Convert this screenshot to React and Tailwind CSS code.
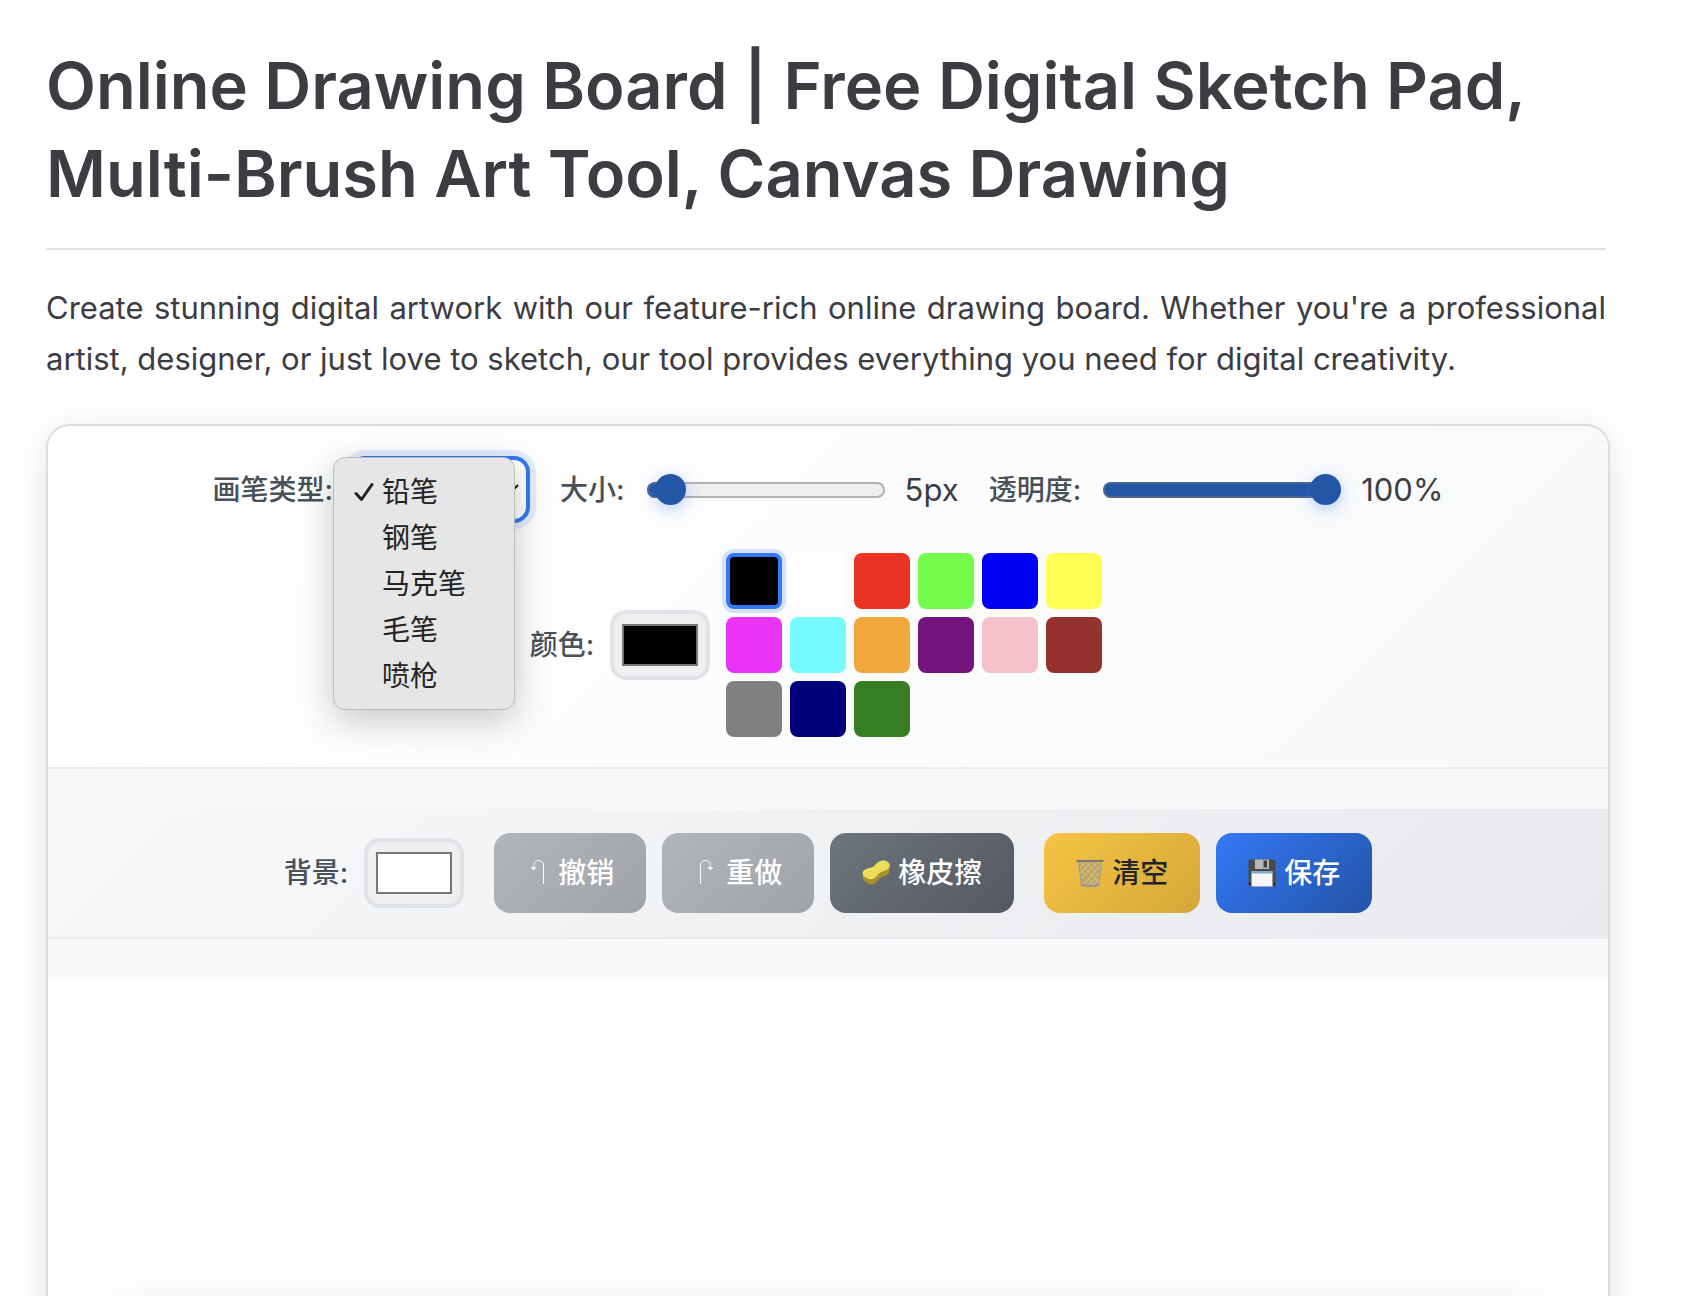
import React, { useState } from "react";

const BRUSHES = ["铅笔", "钢笔", "马克笔", "毛笔", "喷枪"];

const COLORS = [
  { name: "black", className: "bg-black" },
  { name: "white", className: "bg-white" },
  { name: "red", className: "bg-[#eb3324]" },
  { name: "lime", className: "bg-[#75fb4c]" },
  { name: "blue", className: "bg-[#0000f5]" },
  { name: "yellow", className: "bg-[#ffff54]" },
  { name: "magenta", className: "bg-[#ea33f7]" },
  { name: "cyan", className: "bg-[#75fbfd]" },
  { name: "orange", className: "bg-[#f0a83c]" },
  { name: "purple", className: "bg-[#75147c]" },
  { name: "pink", className: "bg-[#f4c2cb]" },
  { name: "brown", className: "bg-[#94332d]" },
  { name: "gray", className: "bg-[#808080]" },
  { name: "navy", className: "bg-[#00007b]" },
  { name: "green", className: "bg-[#377e22]" },
];

const UndoIcon = ({ className }) => (
  <svg viewBox="0 0 24 28" className={className} fill="none" aria-hidden="true">
    <path d="M17.500 25V6.500c0-3-2-5-4.900-5s-5 2.200-5 6.500" stroke="currentColor" strokeWidth="1" />
    <path d="M4.300 7.700l3.300.9 3.200-.9-3.200 3.800z" fill="currentColor" />
  </svg>
);

const SpongeIcon = () => (
  <svg viewBox="0 0 28 28" className="h-7 w-7" aria-hidden="true">
    <path d="M.6 13c0 4 .2 7 1.500 8.500C4.500 24 7.500 26 10.500 25.500c4.500-1 4.500-5.500 8.500-7 4-1.300 8-2.500 8.500-6V6z" fill="#a8912a" />
    <path d="M.6 14C.8 11 4.500 9.800 8.500 8.800c5-1 5.500-5.500 10.500-7 4-1 8.500 1 8.700 4.200.2 3.800-3.200 5.500-7.200 6.500-5.500 1.500-5.500 6.500-10 7.500C6.500 21 .4 17.500.6 14z" fill="#ece05a" />
    <g fill="#cfc03c">
      <circle cx="5" cy="14" r=".6" />
      <circle cx="8" cy="17" r=".6" />
      <circle cx="9" cy="12" r=".6" />
      <circle cx="13" cy="14" r=".6" />
      <circle cx="14" cy="9" r=".6" />
      <circle cx="18" cy="10" r=".6" />
      <circle cx="18" cy="5" r=".6" />
      <circle cx="22" cy="8" r=".6" />
      <circle cx="23" cy="4.500" r=".6" />
    </g>
  </svg>
);

const TrashIcon = () => (
  <svg viewBox="0 0 28 28" className="h-7 w-7" fill="none" aria-hidden="true">
    <path d="M2 2h24l-3 24.500c-4 1.500-14 1.500-18 0z" fill="#c9ab5c" />
    <g stroke="#8f928c" strokeWidth=".7">
      <path d="M3 6l19 21M3 12l13 15M4 18l7 9M6 2l18 19M12 2l13 14M18 2l8 9" />
    </g>
    <g stroke="#d6d6cf" strokeWidth=".7">
      <path d="M25 6L6 27M25 12L12 27M24 18l-7 9M22 2L4 21M16 2L3 16M10 2L2 11" />
    </g>
    <path d="M2.500 3l3 23M25.500 3l-3 23" stroke="#9a9b99" strokeWidth="1" />
    <path d="M5 26c4 1.300 14 1.300 18 0" stroke="#8e98a3" strokeWidth="2" />
    <path d="M.5 1h27v1.800H.5z" fill="#6f7276" />
  </svg>
);

const SaveIcon = () => (
  <svg viewBox="0 0 28 28" className="h-7 w-7" aria-hidden="true">
    <path d="M.5.500h25.500l1.500 1.500v25.500H2L.5 26z" fill="#4a4a4a" />
    <path d="M7 .500h14v9.500H7z" fill="#b8b8b8" />
    <path d="M15.500 1.500h3.500v7h-3.500z" fill="#404040" />
    <path d="M3.500 12.500h21v15h-21z" fill="#f6f6f6" />
    <path d="M3.500 12.500h21v2h-21z" fill="#74aee0" />
    <path d="M1 24h1.500v2H1zM25.500 24H27v2h-1.500z" fill="#1d1d1d" />
  </svg>
);

const Slider = ({ id, min, max, value, onChange }) => {
  // the fill has to stop under the middle of the 31px thumb
  const ratio = (value - min) / (max - min);
  const stop = `calc(${ratio} * (100% - 31px) + 15px)`;
  return (
    <input
      id={id}
      type="range"
      min={min}
      max={max}
      value={value}
      onChange={(e) => onChange(Number(e.target.value))}
      style={{
        backgroundImage: `linear-gradient(to right, #2456a6 ${stop}, #efefef ${stop})`,
      }}
      className="ml-1.5 mr-1 h-4 w-[238px] appearance-none rounded-full shadow-[inset_0_0_0_2px_rgba(118,118,118,0.5)] [&::-webkit-slider-thumb]:h-[31px] [&::-webkit-slider-thumb]:w-[31px] [&::-webkit-slider-thumb]:appearance-none [&::-webkit-slider-thumb]:rounded-full [&::-webkit-slider-thumb]:bg-[#2456a6] [&::-webkit-slider-thumb]:shadow-[0_4px_16px_rgba(52,121,246,0.35)]"
    />
  );
};

const ColorInput = ({ id, value, onChange }) => (
  <input
    id={id}
    type="color"
    value={value}
    onChange={(e) => onChange(e.target.value)}
    className="h-[70px] w-[100px] appearance-none rounded-2xl border-4 border-[#dfe2e7] bg-[#efefef] px-2 py-2.5 [&::-webkit-color-swatch-wrapper]:p-0 [&::-webkit-color-swatch]:border-2 [&::-webkit-color-swatch]:border-[#777777]"
  />
);

const Label = ({ htmlFor, children }) => (
  <label htmlFor={htmlFor} className="font-medium text-[#495057]">
    {children}
  </label>
);

const App = () => {
  const [brush, setBrush] = useState("铅笔");
  const [size, setSize] = useState(5);
  const [opacity, setOpacity] = useState(100);
  const [color, setColor] = useState("#000000");
  const [background, setBackground] = useState("#ffffff");
  const [active, setActive] = useState("black");

  return (
    <div className="h-screen overflow-hidden bg-white pl-[46px] pr-[90px] pt-[42px] font-['Inter','Noto_Sans_CJK_SC',sans-serif] text-[28px] leading-10 text-[#3c3c43]">
      <h1 className="border-b-2 border-[#e2e2e3] pb-[30px] text-[65px] font-semibold leading-[88px] [font-feature-settings:'calt'_0]">
        Online Drawing Board | Free Digital Sketch Pad,{" "}
        <br className="hidden xl:inline" />
        Multi-Brush Art Tool, Canvas Drawing
      </h1>
      <p className="mt-8 text-justify text-[31px] leading-[51px]">
        Create stunning digital artwork with our feature-rich online drawing
        board. Whether you're a professional artist, designer, or just love to
        sketch, our tool provides everything you need for digital creativity.
      </p>

      <main className="-mr-1 mt-10 rounded-3xl border-2 border-[#dcdcdd] bg-[#f8f9fb] shadow-[0_8px_40px_rgba(0,0,0,0.1)]">
        <section className="flex flex-col items-center gap-[30px] rounded-t-[22px] border-b-2 border-[#e9ebee] bg-linear-135 from-white to-[#f8f9fa] py-[30px]">
          <div className="flex items-center gap-[30px]">
            <div className="flex items-center gap-4">
              <Label htmlFor="brush">画笔类型:</Label>
              <div className="relative">
                <select
                  id="brush"
                  value={brush}
                  onChange={(e) => setBrush(e.target.value)}
                  className="block h-[67px] w-[181px] appearance-none rounded-2xl border-4 border-[#3478f6] bg-white px-5 shadow-[0_0_0_6px_rgba(52,120,246,0.13)] outline-none"
                >
                  {BRUSHES.map((name) => (
                    <option key={name}>{name}</option>
                  ))}
                </select>
                <svg
                  viewBox="0 0 20 12"
                  className="pointer-events-none absolute right-[11px] top-7 h-3 w-5"
                  fill="none"
                  stroke="#111111"
                  strokeWidth="2"
                  aria-hidden="true"
                >
                  <path d="M1 1l9 9 9-9" />
                </svg>
                <ul
                  role="listbox"
                  aria-label="画笔类型"
                  className="absolute -left-4 top-px z-10 w-[182px] rounded-xl border border-[#bdbdbd] bg-[#e6e6e6] pb-2.5 pt-[11px] text-[#232323] shadow-[0_10px_36px_rgba(0,0,0,0.22)]"
                >
                  {BRUSHES.map((name) => (
                    <li key={name} role="option" aria-selected={name === brush}>
                      <button
                        type="button"
                        onClick={() => setBrush(name)}
                        className="flex h-[46px] w-full items-center gap-2 pl-5"
                      >
                        <svg
                          viewBox="0 0 20 20"
                          className={name === brush ? "h-5 w-5" : "invisible h-5 w-5"}
                          fill="none"
                          stroke="currentColor"
                          strokeWidth="3"
                          strokeLinecap="round"
                          strokeLinejoin="round"
                          aria-hidden="true"
                        >
                          <path d="M2 11.500l5.500 6L18 2.500" />
                        </svg>
                        {name}
                      </button>
                    </li>
                  ))}
                </ul>
              </div>
            </div>

            <div className="flex items-center gap-4">
              <Label htmlFor="size">大小:</Label>
              <Slider id="size" min={1} max={100} value={size} onChange={setSize} />
              <span className="text-[31px]">{size}px</span>
            </div>

            <div className="flex items-center gap-4">
              <Label htmlFor="opacity">透明度:</Label>
              <Slider id="opacity" min={0} max={100} value={opacity} onChange={setOpacity} />
              <span className="text-[31px]">{opacity}%</span>
            </div>
          </div>

          <div className="flex items-center gap-4">
            <Label htmlFor="color">颜色:</Label>
            <ColorInput id="color" value={color} onChange={setColor} />
            <div className="flex w-[400px] flex-wrap gap-2">
              {COLORS.map(({ name, className }) => (
                <button
                  key={name}
                  type="button"
                  aria-label={name}
                  onClick={() => setActive(name)}
                  className={`h-14 w-14 rounded-lg ${className} ${
                    name === active
                      ? "border-4 border-[#3478f6] shadow-[0_0_0_4px_rgba(52,120,246,0.2)]"
                      : ""
                  }`}
                />
              ))}
            </div>
          </div>
        </section>

        <section className="my-10 flex items-center justify-center gap-[30px] border-b-2 border-[#e9ebee] bg-linear-135 from-[#f8f9fa] to-[#e8e9ec] py-6">
          <div className="flex items-center gap-4">
            <Label htmlFor="background">背景:</Label>
            <ColorInput id="background" value={background} onChange={setBackground} />
          </div>

          <div className="flex items-center gap-4 font-medium text-white">
            <button
              type="button"
              disabled
              className="flex h-20 items-center gap-2 rounded-2xl bg-linear-135 from-[#b1b5ba] to-[#a0a3a8] px-8"
            >
              <UndoIcon className="h-7 w-6" />
              撤销
            </button>
            <button
              type="button"
              disabled
              className="flex h-20 items-center gap-2 rounded-2xl bg-linear-135 from-[#b1b5ba] to-[#a0a3a8] px-8"
            >
              <UndoIcon className="h-7 w-6 -scale-x-100" />
              重做
            </button>
            <button
              type="button"
              className="flex h-20 items-center gap-2 rounded-2xl bg-linear-135 from-[#6d757d] to-[#555861] px-8"
            >
              <SpongeIcon />
              橡皮擦
            </button>
          </div>

          <div className="flex items-center gap-4 font-medium">
            <button
              type="button"
              className="flex h-20 items-center gap-2 rounded-2xl bg-linear-135 from-[#f6c445] to-[#d5a738] px-8 text-[#212529]"
            >
              <TrashIcon />
              清空
            </button>
            <button
              type="button"
              className="flex h-20 items-center gap-2 rounded-2xl bg-linear-135 from-[#3479f6] to-[#2353a8] px-8 text-white"
            >
              <SaveIcon />
              保存
            </button>
          </div>
        </section>

        <div className="bg-white">
          <canvas className="block h-80 w-full" />
          <div className="mx-14 h-24 rounded-2xl bg-white shadow-[0_0_40px_rgba(0,0,0,0.06)]" />
        </div>
      </main>
    </div>
  );
};

export default App;
